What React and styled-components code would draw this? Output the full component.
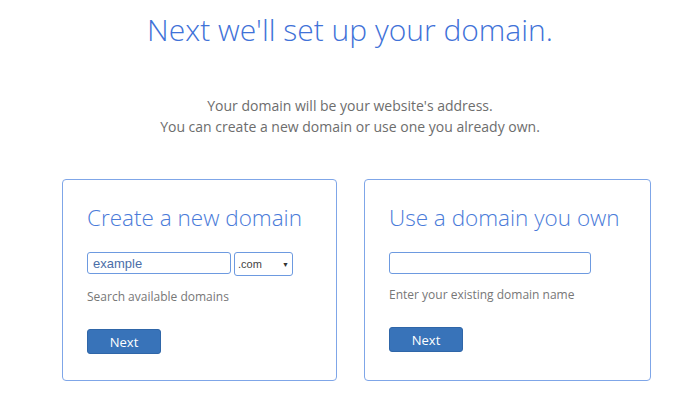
import React from 'react';
import styled, { createGlobalStyle } from 'styled-components';

const GlobalStyle = createGlobalStyle`
  html, body {
    margin: 0;
    padding: 0;
    background: #ffffff;
    font-family: 'Open Sans', 'Liberation Sans', sans-serif;
  }
`;

const Page = styled.div`
  width: 700px;
  height: 420px;
  overflow: hidden;
`;

const Heading = styled.h1`
  margin: 10px 0 0;
  text-align: center;
  font-size: 30px;
  font-weight: 300;
  line-height: 40px;
  color: #3f72d8;
`;

const Intro = styled.p`
  margin: 45px 0 0;
  text-align: center;
  font-size: 14px;
  line-height: 21px;
  color: #6d6d6d;
`;

const Cards = styled.div`
  display: flex;
  gap: 27px;
  margin: 42px 0 0 62px;
`;

const Card = styled.section`
  box-sizing: border-box;
  width: ${(p) => p.$width}px;
  height: 202px;
  border: 1px solid #7fa6e8;
  border-radius: 4px;
  padding: 22px 24px 0;
`;

const CardTitle = styled.h2`
  margin: 0;
  font-size: 22.5px;
  font-weight: 300;
  line-height: 32px;
  color: #4a7bd9;
`;

const Fields = styled.div`
  display: flex;
  gap: 3px;
  margin-top: 18px;
  align-items: flex-start;
`;

const TextInput = styled.input`
  box-sizing: border-box;
  width: ${(p) => p.$width}px;
  height: 22px;
  border: 1px solid #6d9ae0;
  border-radius: 3px;
  padding: 0 5px;
  font-family: 'Liberation Sans', Arial, sans-serif;
  font-size: 13px;
  color: #4b6ea8;
  outline: none;
`;

const Select = styled.div`
  box-sizing: border-box;
  width: 59px;
  height: 24px;
  border: 1px solid #6d9ae0;
  border-radius: 3px;
  padding: 0 3px 0 3px;
  display: flex;
  align-items: center;
  justify-content: space-between;
  font-family: 'Liberation Sans', Arial, sans-serif;
  font-size: 11px;
  color: #444;
`;

const Caret = styled.span`
  font-size: 7px;
  color: #333;
`;

const Hint = styled.p`
  margin: 12px 0 0;
  font-size: 12px;
  line-height: 18px;
  color: #777777;
`;

const Button = styled.button`
  display: block;
  margin-top: 23px;
  width: 74px;
  height: 25px;
  border: 1px solid #2f66a8;
  border-radius: 3px;
  background: #3873b9;
  color: #ffffff;
  font-family: 'Open Sans', 'Liberation Sans', sans-serif;
  font-size: 13px;
  padding: 0;
`;

export default function App() {
  return (
    <Page>
      <GlobalStyle />
      <Heading>Next we'll set up your domain.</Heading>
      <Intro>
        Your domain will be your website's address.
        <br />
        You can create a new domain or use one you already own.
      </Intro>
      <Cards>
        <Card $width={275}>
          <CardTitle>Create a new domain</CardTitle>
          <Fields>
            <TextInput $width={144} defaultValue="example" />
            <Select>
              .com <Caret>▼</Caret>
            </Select>
          </Fields>
          <Hint>Search available domains</Hint>
          <Button>Next</Button>
        </Card>
        <Card $width={287}>
          <CardTitle>Use a domain you own</CardTitle>
          <Fields>
            <TextInput $width={202} />
          </Fields>
          <Hint>Enter your existing domain name</Hint>
          <Button>Next</Button>
        </Card>
      </Cards>
    </Page>
  );
}
